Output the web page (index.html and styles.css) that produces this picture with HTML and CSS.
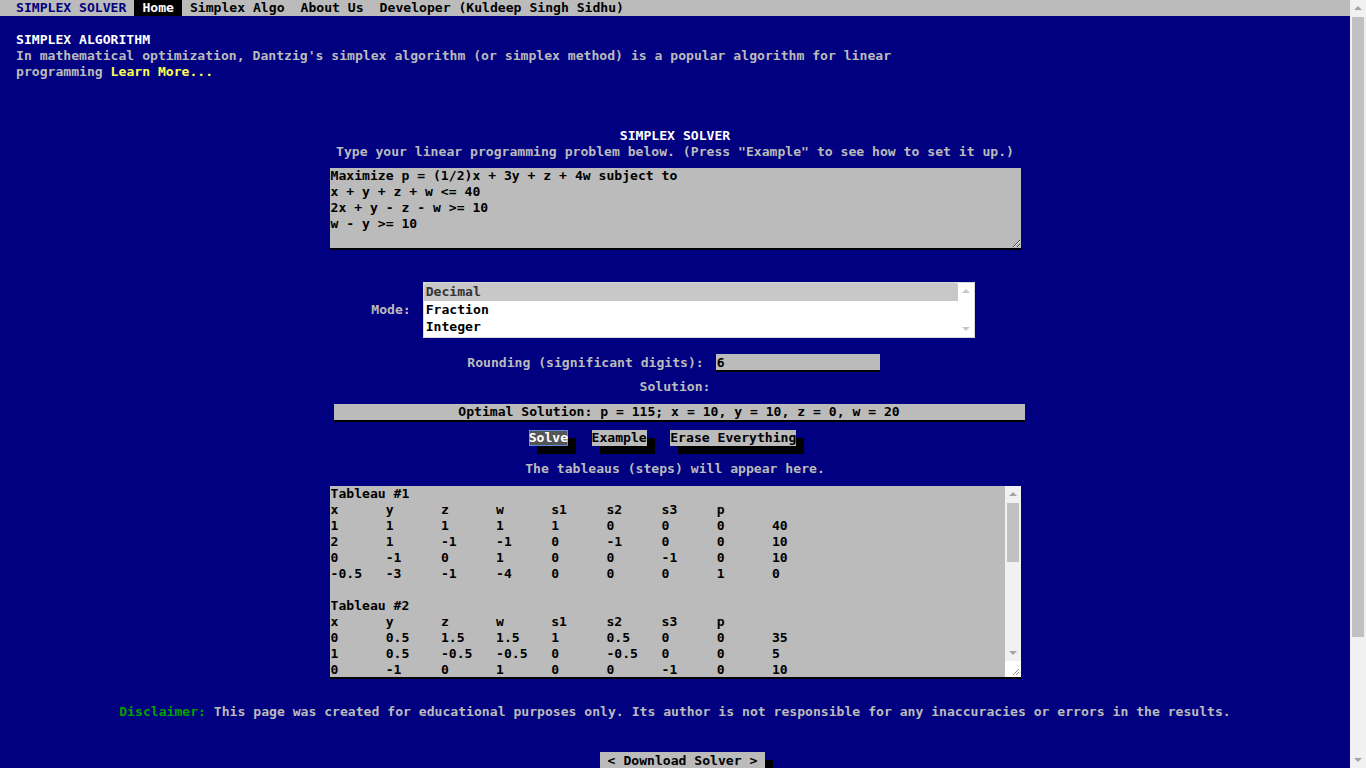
FILE: index.html
```html
<!DOCTYPE html>
<html lang="en">
<head>
<meta charset="utf-8">
<title>Simplex Solver</title>
<link rel="stylesheet" href="styles.css">
</head>
<body>
<nav class="menubar">
  <span class="brand">SIMPLEX SOLVER</span>
  <a class="menu-item active" href="#">Home</a>
  <a class="menu-item" href="#">Simplex Algo</a>
  <a class="menu-item" href="#">About Us</a>
  <a class="menu-item" href="#">Developer (Kuldeep Singh Sidhu)</a>
</nav>

<header class="intro">
  <div class="intro-title">SIMPLEX ALGORITHM</div>
  <p class="intro-text">In mathematical optimization, Dantzig's simplex algorithm (or simplex method) is a popular algorithm for linear programming <a class="learn-more" href="#">Learn More...</a></p>
</header>

<main class="solver">
  <div class="solver-title">SIMPLEX SOLVER</div>
  <div class="solver-hint">Type your linear programming problem below. (Press "Example" to see how to set it up.)</div>
  <textarea class="field problem" spellcheck="false">Maximize p = (1/2)x + 3y + z + 4w subject to
x + y + z + w &lt;= 40
2x + y - z - w &gt;= 10
w - y &gt;= 10</textarea>

  <div class="mode-row">
    <label class="label">Mode:</label>
    <div class="listbox">
      <select class="mode" size="3">
        <option selected>Decimal</option>
        <option>Fraction</option>
        <option>Integer</option>
      </select>
      <div class="list-scroll">
        <span class="arrow up light"></span>
        <span class="arrow down light"></span>
      </div>
    </div>
  </div>

  <div class="round-row">
    <label class="label">Rounding (significant digits):</label>
    <input class="field round-input" type="text" value="6">
  </div>

  <div class="solution-label">Solution:</div>
  <div class="field output">Optimal Solution: p = 115; x = 10, y = 10, z = 0, w = 20</div>

  <div class="buttons">
    <button class="btn primary">Solve</button>
    <button class="btn">Example</button>
    <button class="btn">Erase Everything</button>
  </div>

  <div class="steps-hint">The tableaus (steps) will appear here.</div>
  <div class="tableau-box">
    <textarea class="tableaus" spellcheck="false">Tableau #1
x&#9;y&#9;z&#9;w&#9;s1&#9;s2&#9;s3&#9;p
1&#9;1&#9;1&#9;1&#9;1&#9;0&#9;0&#9;0&#9;40
2&#9;1&#9;-1&#9;-1&#9;0&#9;-1&#9;0&#9;0&#9;10
0&#9;-1&#9;0&#9;1&#9;0&#9;0&#9;-1&#9;0&#9;10
-0.5&#9;-3&#9;-1&#9;-4&#9;0&#9;0&#9;0&#9;1&#9;0

Tableau #2
x&#9;y&#9;z&#9;w&#9;s1&#9;s2&#9;s3&#9;p
0&#9;0.5&#9;1.5&#9;1.5&#9;1&#9;0.5&#9;0&#9;0&#9;35
1&#9;0.5&#9;-0.5&#9;-0.5&#9;0&#9;-0.5&#9;0&#9;0&#9;5
0&#9;-1&#9;0&#9;1&#9;0&#9;0&#9;-1&#9;0&#9;10
0&#9;-2.75&#9;-1.25&#9;-4.25&#9;0&#9;-0.25&#9;0&#9;1&#9;2.5

Tableau #3
x&#9;y&#9;z&#9;w&#9;s1&#9;s2&#9;s3&#9;p
0&#9;2&#9;1.5&#9;0&#9;1&#9;0.5&#9;1.5&#9;0&#9;20
1&#9;0&#9;-0.5&#9;0&#9;0&#9;-0.5&#9;-0.5&#9;0&#9;10
0&#9;-1&#9;0&#9;1&#9;0&#9;0&#9;-1&#9;0&#9;10
0&#9;-7&#9;-1.25&#9;0&#9;0&#9;-0.25&#9;-4.25&#9;1&#9;45

Tableau #4
x&#9;y&#9;z&#9;w&#9;s1&#9;s2&#9;s3&#9;p
0&#9;1&#9;0.75&#9;0&#9;0.5&#9;0.25&#9;0.75&#9;0&#9;10
1&#9;0&#9;-0.5&#9;0&#9;0&#9;-0.5&#9;-0.5&#9;0&#9;10
0&#9;0&#9;0.75&#9;1&#9;0.5&#9;0.25&#9;-0.25&#9;0&#9;20
0&#9;0&#9;4&#9;0&#9;3.5&#9;1.5&#9;1&#9;1&#9;115</textarea>
    <div class="vscroll">
      <div class="sb-btn"><span class="arrow up"></span></div>
      <div class="sb-track"><div class="sb-thumb small"></div></div>
      <div class="sb-btn"><span class="arrow down"></span></div>
      <div class="sb-corner">
        <svg width="16" height="16" viewBox="0 0 16 16"><path d="M14 8 L8 14 M14 11 L11 14" stroke="#8a8a8a" stroke-width="1"/></svg>
      </div>
    </div>
  </div>

  <div class="disclaimer"><span class="disclaimer-tag">Disclaimer:</span> This page was created for educational purposes only. Its author is not responsible for any inaccuracies or errors in the results.</div>

  <div class="download-row">
    <button class="btn download">&lt; Download Solver &gt;</button>
  </div>
</main>

<div class="page-scroll">
  <div class="sb-btn"><span class="arrow up"></span></div>
  <div class="sb-track"><div class="sb-thumb page"></div></div>
  <div class="sb-btn"><span class="arrow down"></span></div>
</div>
</body>
</html>
```

FILE: styles.css
```css
html, body {
  margin: 0;
  padding: 0;
}

body {
  background: #000080;
  color: #bbbbbb;
  font-family: "DejaVu Sans Mono", "Liberation Mono", monospace;
  font-weight: bold;
  font-size: 13.1px;
  line-height: 16px;
  padding-right: 16px;
}

/* ---------- menu bar ---------- */
.menubar {
  display: flex;
  height: 16px;
  background: #bbbbbb;
  padding-left: 8px;
}

.brand {
  padding: 0 8px;
  color: #000080;
}

.menu-item {
  padding: 0 8px;
  color: #000000;
  text-decoration: none;
}

.menu-item.active {
  background: #000000;
  color: #ffffff;
}

/* ---------- intro ---------- */
.intro {
  padding: 16px 16px 0;
  max-width: 920px;
}

.intro-title {
  color: #ffffff;
}

.intro-text {
  margin: 0;
}

.learn-more {
  color: #ffff55;
  text-decoration: none;
}

/* ---------- solver ---------- */
.solver {
  margin-top: 48px;
  display: flex;
  flex-direction: column;
  align-items: center;
  text-align: center;
  padding-bottom: 60px;
}

.solver-title {
  color: #ffffff;
}

.field {
  box-sizing: border-box;
  background: #bbbbbb;
  color: #000000;
  border: none;
  border-bottom: 2px solid #000000;
  border-radius: 0;
  font: inherit;
  line-height: 16px;
  padding: 0 1px;
  margin: 0;
  outline: none;
}

.problem {
  width: 691px;
  height: 82px;
  margin-top: 8px;
  text-align: left;
}

.mode-row {
  display: flex;
  align-items: center;
  gap: 12px;
  margin-top: 32px;
  padding-right: 4px;
}

.listbox {
  box-sizing: border-box;
  display: flex;
  width: 552px;
  height: 56px;
  border: 1px solid #d8d8d8;
  background: #ffffff;
}

.mode {
  flex: 1;
  height: 54px;
  border: none;
  background: #ffffff;
  color: #000000;
  font: inherit;
  padding: 0;
  margin: 0;
  overflow: hidden;
  outline: none;
}

.mode option {
  font-family: "DejaVu Sans Mono", "Liberation Mono", monospace;
  font-weight: bold;
  font-size: 13.1px;
  padding: 1px 2px;
  line-height: 16px;
  color: #000000;
}

.mode option:checked {
  background: #c8c8c8;
  color: #333333;
}

.list-scroll {
  width: 16px;
  display: flex;
  flex-direction: column;
  justify-content: space-between;
  align-items: center;
  padding: 6px 0;
  box-sizing: border-box;
  background: #ffffff;
}

.round-row {
  display: flex;
  align-items: center;
  gap: 12px;
  margin-top: 16px;
  padding-right: 3px;
}

.round-input {
  width: 164px;
  height: 18px;
  text-align: left;
}

.solution-label {
  margin-top: 7px;
}

.output {
  width: 691px;
  height: 18px;
  margin-top: 9px;
  margin-left: 8px;
  text-align: center;
}

.buttons {
  display: flex;
  gap: 23.5px;
  margin-top: 8px;
  padding-right: 25px;
}

.btn {
  font: inherit;
  line-height: 16px;
  height: 16px;
  padding: 0;
  margin: 0;
  border: none;
  border-radius: 0;
  background: #bbbbbb;
  color: #000000;
  box-shadow: 8px 8px 0 #000000;
  cursor: pointer;
}

.btn.primary {
  background: #555555;
  color: #ffffff;
  box-shadow: inset 0 0 0 1px #5b8be0, 8px 8px 0 #000000;
}

.steps-hint {
  margin-top: 15px;
}

.tableau-box {
  box-sizing: border-box;
  display: flex;
  width: 691px;
  height: 193px;
  margin-top: 9px;
  background: #bbbbbb;
  border-bottom: 2px solid #000000;
}

.tableaus {
  flex: 1;
  height: 191px;
  box-sizing: border-box;
  border: none;
  margin: 0;
  padding: 0 1px;
  background: #bbbbbb;
  color: #000000;
  font: inherit;
  line-height: 16px;
  text-align: left;
  tab-size: 7;
  -moz-tab-size: 7;
  resize: none;
  overflow: hidden;
  outline: none;
}

/* ---------- fake scrollbars ---------- */
.vscroll {
  width: 16px;
  display: flex;
  flex-direction: column;
  background: #f1f1f1;
}

.sb-btn {
  height: 16px;
  display: flex;
  align-items: center;
  justify-content: center;
  flex: none;
}

.sb-track {
  flex: 1;
  padding: 1px 2px;
}

.sb-thumb {
  background: #c1c1c1;
}

.sb-thumb.small {
  height: 59px;
}

.sb-thumb.page {
  height: 620px;
}

.sb-corner {
  height: 16px;
  background: #ffffff;
  flex: none;
}

.sb-corner svg {
  display: block;
}

.arrow {
  width: 0;
  height: 0;
  border-left: 4px solid transparent;
  border-right: 4px solid transparent;
}

.arrow.up {
  border-bottom: 4px solid #a3a3a3;
}

.arrow.down {
  border-top: 4px solid #a3a3a3;
}

.arrow.light.up {
  border-bottom-color: #c8c8c8;
}

.arrow.light.down {
  border-top-color: #c8c8c8;
}

.page-scroll {
  position: fixed;
  top: 0;
  right: 0;
  bottom: 0;
  width: 16px;
  display: flex;
  flex-direction: column;
  background: #f1f1f1;
}

.disclaimer {
  margin-top: 25px;
}

.disclaimer-tag {
  color: #00a000;
}

.download-row {
  margin-top: 32px;
  padding-left: 15px;
}

.btn.download {
  padding: 0 8px;
  height: 18px;
}
```
